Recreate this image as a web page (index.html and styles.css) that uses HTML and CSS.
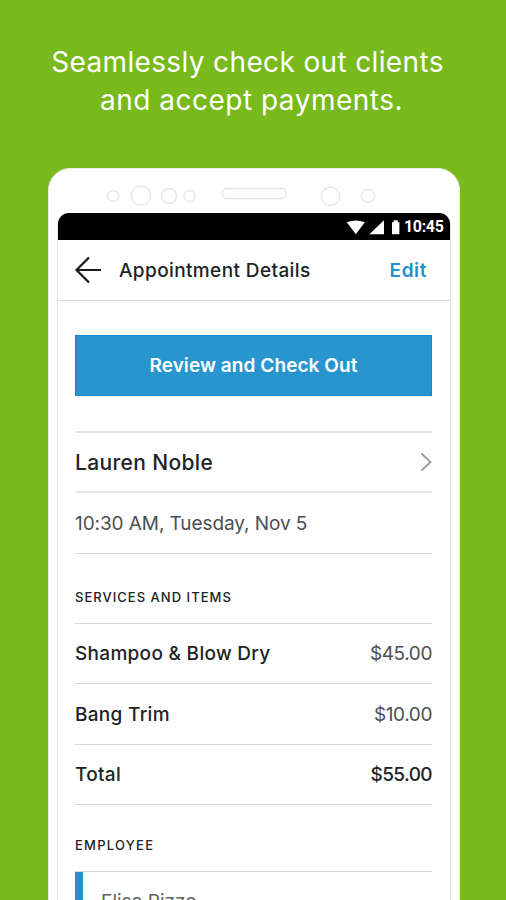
FILE: index.html
```html
<!DOCTYPE html>
<html lang="en">
<head>
<meta charset="utf-8">
<title>Appointment Details</title>
<link rel="stylesheet" href="styles.css">
</head>
<body>
<main class="promo">
  <h1 class="headline"><span class="headline-first">Seamlessly check out clients</span><br><span class="headline-second">and accept payments.</span></h1>
  <div class="phone">
    <svg class="sensors" width="410" height="44" viewBox="49 169 410 44" fill="none" stroke="#e4e4e6" stroke-width="1.3">
      <circle cx="113" cy="196" r="5.5"/>
      <circle cx="141" cy="195.500" r="9.700"/>
      <circle cx="169" cy="196" r="7.500"/>
      <circle cx="189.500" cy="196" r="5.500"/>
      <rect x="222.500" y="188.500" width="63.500" height="10" rx="4"/>
      <circle cx="330.500" cy="196.300" r="9.200"/>
      <circle cx="368" cy="195.700" r="6.500"/>
    </svg>
    <div class="screen">
      <div class="status">
        <svg class="status-icons" width="56" height="16" viewBox="346 219 56 16" fill="#fff">
          <path d="M346.800 222.300Q355.800 218.500 364.800 222.300L355.800 234.200Z"/>
          <path d="M384 220.300V234.200H369.300Z"/>
          <path d="M392 222.200H393.700V220.300H397.700V222.200H399.400V234.200H392Z"/>
        </svg>
        <span class="clock">10:45</span>
      </div>
      <header class="bar">
        <svg class="back" width="28" height="28" viewBox="74 256 28 28" fill="none" stroke="#17191b" stroke-width="2.200"><path d="M101 270H76.500M89 257.500L76.500 270L89 282.500"/></svg>
        <span class="title">Appointment Details</span>
        <span class="edit">Edit</span>
      </header>
      <div class="content">
        <button class="checkout"><span>Review and Check Out</span></button>
        <div class="row client"><span class="name">Lauren Noble</span>
          <svg class="chevron" width="12" height="20" viewBox="421 452 12 20" fill="none" stroke="#999b9d" stroke-width="1.800"><path d="M422.500 453.500L431.500 462L422.500 470.500"/></svg>
        </div>
        <div class="row when"><span class="date">10:30 AM, Tuesday, Nov 5</span></div>
        <h2 class="section services">SERVICES AND ITEMS</h2>
        <div class="row item first"><span>Shampoo &amp; Blow Dry</span><span class="price">$45.00</span></div>
        <div class="row item bang"><span>Bang Trim</span><span class="price">$10.00</span></div>
        <div class="row item"><span>Total</span><span class="price strong">$55.00</span></div>
        <h2 class="section staff">EMPLOYEE</h2>
        <div class="employee"><span>Elisa Rizzo</span></div>
      </div>
    </div>
  </div>
</main>
</body>
</html>
```
FILE: styles.css
```css
* { box-sizing: border-box; }
body { margin: 0; }
.promo {
  height: 900px;
  overflow: hidden;
  background: #78b91c;
  font-family: Inter, "Liberation Sans", sans-serif;
  color: #202327;
  padding-top: 43px;
}
.headline {
  margin: 0;
  height: 125px;
  text-align: center;
  font-size: 28px;
  font-weight: 400;
  line-height: 38px;
  color: #fff;
  padding-right: 11px;
  white-space: nowrap;
}
.headline-first { letter-spacing: 0.36px; }
.headline-second { letter-spacing: 0.5px; margin-left: 8px; }
.phone {
  width: 412px;
  height: 760px;
  margin-left: 48px;
  border: 1px solid #e9ebe8;
  border-radius: 22px 22px 0 0;
  background: #fff;
}
.sensors { display: block; }
.screen {
  width: 394px;
  margin-left: 8px;
  border: solid #e4e6e6;
  border-width: 0 1px;
  border-radius: 12px 12px 0 0;
}
.status {
  display: flex;
  align-items: center;
  height: 27px;
  padding-left: 288px;
  background: #000;
  border-radius: 11px 11px 0 0;
  color: #fff;
}
.clock {
  margin-left: 2px;
  font: 700 16px/26px Roboto, sans-serif;
  letter-spacing: -0.35px;
  padding-top: 1px;
}
.bar {
  display: flex;
  align-items: center;
  height: 61px;
  padding: 0 23px 0 16px;
  border-bottom: 1px solid #d8dadb;
}
.title { margin: 1px 0 0 17px; font-size: 19px; font-weight: 500; letter-spacing: 0.39px; }
.edit { margin: 1px 0 0 auto; font-size: 19px; font-weight: 600; letter-spacing: 0.6px; color: #2690cc; }
.content { padding: 34px 18px 0 17px; }
.checkout {
  display: block;
  width: 357px;
  height: 61px;
  padding: 0;
  border: 1px solid #168aca;
  background: #2995cf;
  color: #fff;
  font: 600 19px Inter, sans-serif;
  letter-spacing: 0.08px;
}
.row {
  display: flex;
  align-items: center;
  justify-content: space-between;
  height: 61px;
  border-bottom: 1px solid #d7d9da;
  font-size: 19px;
}
.client {
  height: 62px;
  margin-top: 35px;
  border: solid #e2e4e5;
  border-width: 2px 0;
  font-size: 21px;
  font-weight: 500;
  letter-spacing: 0.35px;
}
.when { letter-spacing: -0.08px; color: #4b4f52; }
.section { margin: 0; font-size: 13px; font-weight: 500; line-height: 20px; }
.services { height: 69px; padding-top: 33px; letter-spacing: 1.02px; }
.item { font-weight: 500; height: 60px; letter-spacing: 0.3px; }
.first { border-top: 1px solid #d7d9da; height: 61px; }
.bang { height: 61px; }
.price { font-weight: 400; letter-spacing: -0.4px; color: #4b4f52; }
.strong { font-weight: 500; letter-spacing: -0.6px; color: #202327; }
.staff { height: 66px; padding-top: 30px; letter-spacing: 1.25px; }
.employee {
  height: 60px;
  border-top: 1px solid #d7d9da;
  background: linear-gradient(#2391cd, #2391cd) left / 8px 100% no-repeat;
  padding: 18px 0 0 26px;
  font-size: 19px;
  line-height: 24px;
  color: #5d6164;
}
```
